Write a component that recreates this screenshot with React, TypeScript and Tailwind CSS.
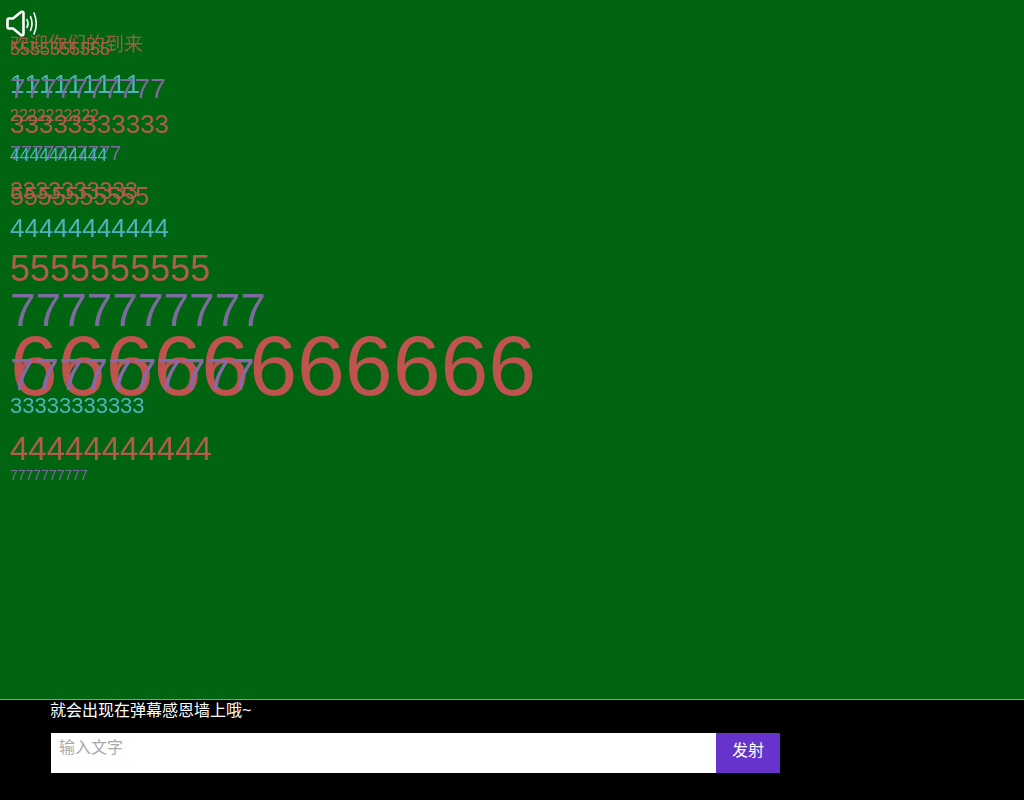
const font = { fontFamily: '"Liberation Sans", "Noto Sans CJK SC", sans-serif' };

// 弹幕: every item sits at its own spot on the wall, so they are absolutely placed
const danmaku = [
  { text: '欢迎你们的到来', cls: 'top-[35px] text-[19px] text-[#9c6040]' },
  { text: '5555555555', cls: 'top-[40px] text-[18px] text-[#b25c4b]' },
  { text: '111111111', cls: 'top-[71px] text-[26px] text-[#4fb3bf] [font-kerning:none]' },
  { text: '7777777777', cls: 'top-[75px] text-[28px] text-[#7d6a9e]' },
  { text: '2222222222', cls: 'top-[108px] text-[16px] text-[#b25c4b]' },
  { text: '33333333333', cls: 'top-[111px] text-[26px] text-[#b25c4b]' },
  { text: '7777777777', cls: 'top-[143px] text-[20px] text-[#7d6a9e]' },
  { text: '4444444444', cls: 'top-[147px] text-[17.5px] text-[#4fb3bf]' },
  { text: '3333333333', cls: 'top-[180px] text-[23px] text-[#b25c4b]' },
  { text: '5555555555', cls: 'top-[184px] text-[25px] text-[#b25c4b]' },
  { text: '44444444444', cls: 'top-[215px] text-[26px] text-[#4fb3bf]' },
  { text: '5555555555', cls: 'top-[251px] text-[36px] text-[#b25c4b]' },
  { text: '7777777777', cls: 'top-[287px] text-[46px] text-[#7d6a9e]' },
  { text: '66666666666', cls: 'top-[322px] text-[86px] text-[#bf5350]' },
  { text: '7777777777', cls: 'top-[353px] text-[44px] text-[#8a68a8]' },
  { text: '33333333333', cls: 'top-[395px] text-[22px] text-[#4fb3bf]' },
  { text: '44444444444', cls: 'top-[432px] text-[33px] text-[#b25c4b]' },
  { text: '7777777777', cls: 'top-[468px] text-[14px] text-[#7d6a9e]' },
];

function SpeakerIcon() {
  return (
    <svg className="absolute left-[6px] top-[10px]" width="32" height="27" viewBox="0 0 32 27" fill="none" stroke="white" strokeLinecap="round" strokeLinejoin="round">
      <path d="M1.5 10 Q1.5 8.5 3 8.5 H7 L15 2 Q17.5 1 17.5 3.5 V23.5 Q17.5 26 15 25 L7 18.5 H3 Q1.5 18.5 1.5 17 Z" strokeWidth="2.6" />
      <path d="M21 9.5 Q23 13.5 21 17.5" strokeWidth="1.6" />
      <path d="M24.5 6.5 Q27.5 13.5 24.5 20.5" strokeWidth="1.6" />
      <path d="M28 3 Q32.5 13.5 28 24" strokeWidth="1.6" />
    </svg>
  );
}

export default function App() {
  return (
    <div className="flex h-[800px] flex-col overflow-hidden bg-black" style={font}>
      <div className="relative flex-1 bg-[#006410]">
        {danmaku.map((item, i) => (
          <div key={i} className={`absolute left-[10px] whitespace-nowrap leading-none will-change-transform ${item.cls}`}>
            {item.text}
          </div>
        ))}
        <SpeakerIcon />
      </div>
      <div className="h-[101px] border-t border-[#8a9a7a] bg-black pl-[51px]">
        <p className="h-[33px] text-[16px] leading-[21px] text-white -ml-px">就会出现在弹幕感恩墙上哦~</p>
        <div className="flex h-[40px] w-[729px]">
          <input
            placeholder="输入文字"
            className="h-full flex-1 bg-white px-2 pb-[11px] text-[16px] outline-none placeholder:text-[#a9a9a9]"
          />
          <button className="w-[64px] bg-[#6633cc] pb-[5px] text-[16px] text-white">发射</button>
        </div>
      </div>
    </div>
  );
}
